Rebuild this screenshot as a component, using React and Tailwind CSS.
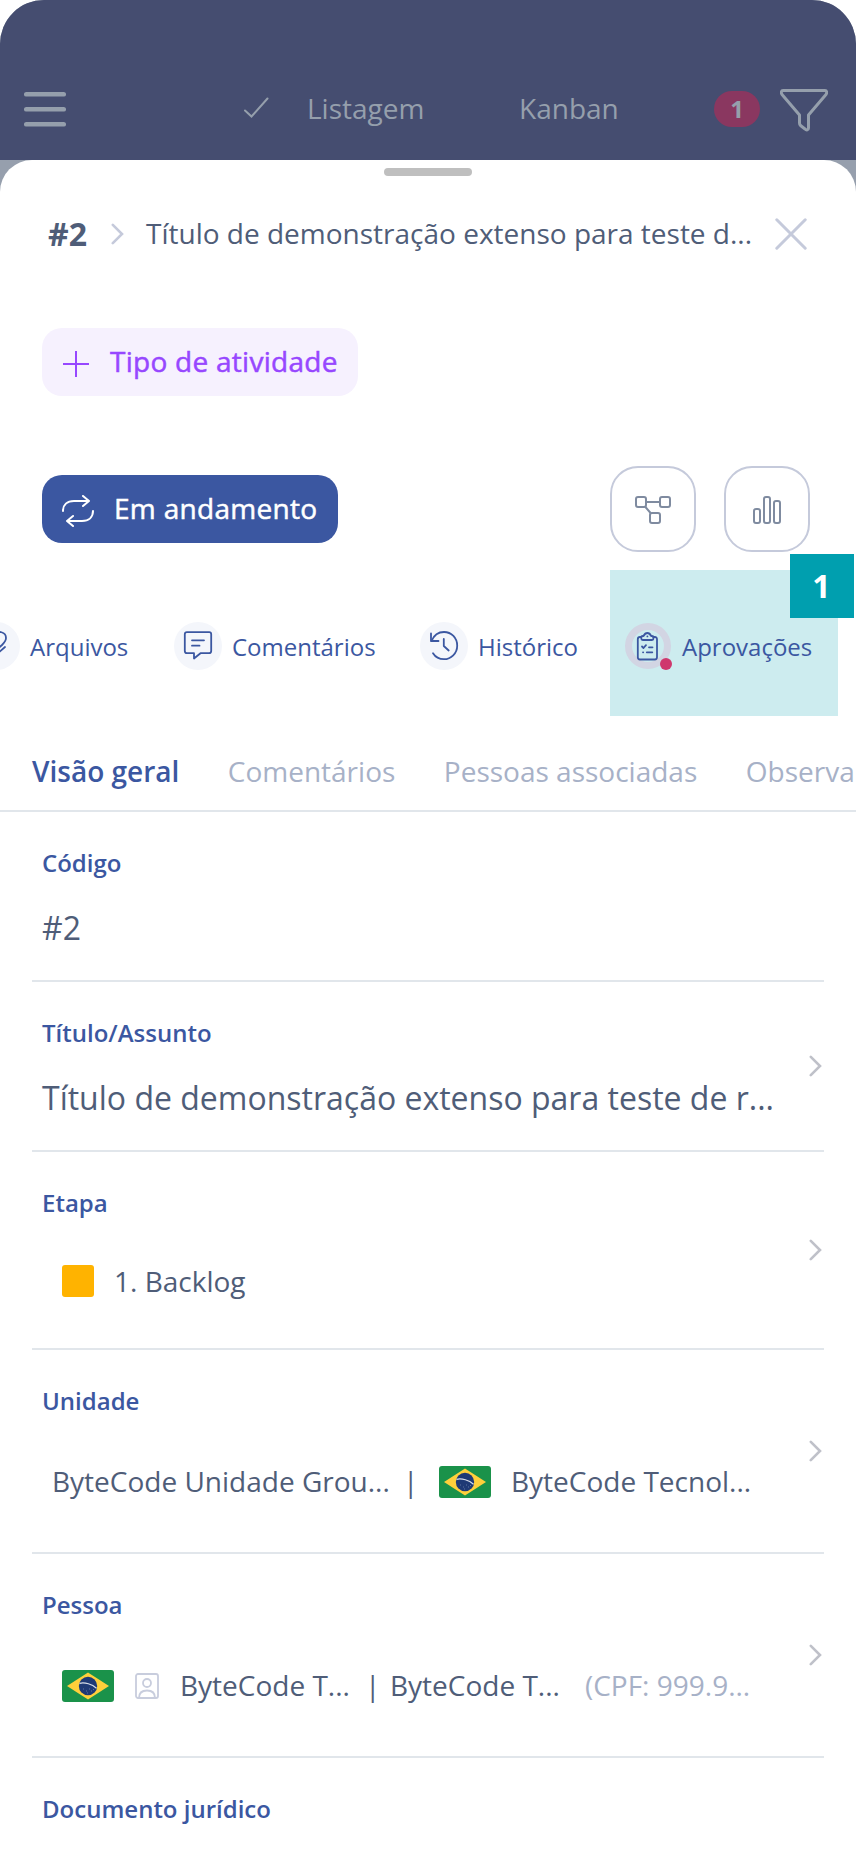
import React, { useState } from 'react';

const Chevron = ({ className }) => (
  <svg className={className} width="13" height="22" viewBox="0 0 13 22" fill="none" stroke="currentColor" strokeWidth="2.6">
    <path d="M1.8 1.8 L11 11 L1.8 20.2" strokeLinecap="round" />
  </svg>
);

const BrazilFlag = () => (
  <svg className="mt-[2px] shrink-0" width="52" height="32" viewBox="0 0 52 32">
    <rect width="52" height="32" rx="3" fill="#1a924a" />
    <path d="M5 16 L26 2.5 L47 16 L26 29.5 Z" fill="#ffd03b" />
    <circle cx="26" cy="16" r="9.2" fill="#1f3a75" />
    <path d="M17.5 13.3 C23 12.2 30 14 34.5 18.2" stroke="#d7dde8" strokeWidth="1.2" fill="none" />
    <path d="M21 19h1M24 21h1M27 19h1M29 21h1M25 23h1M31 19.5h1" stroke="#8c9cc0" strokeWidth="0.6" />
  </svg>
);

const icons = {
  clip: (
    <path d="M10 24 L22 12 C26 8.5 34 9.5 34 16 C34 19 32 21 30 23 L17 35 M33 25 L25 32" />
  ),
  comment: (
    <>
      <path d="M13 10.2 H35.2 C36.5 10.2 37.2 11 37.2 12.2 V29 C37.2 30.5 36.5 31.2 35 31.2 H26.5 L20 36.5 V31.2 H13 C11.5 31.2 10.8 30.5 10.8 29 V12.2 C10.8 11 11.5 10.2 13 10.2 Z" />
      <path d="M18 18.3 H30 M18 23.7 H25.5" />
    </>
  ),
  history: (
    <>
      <path d="M11.5 19 C14 13 19 10 24 10 C31.5 10 37.2 16 37.2 23.7 C37.2 31.3 31 37.2 24 37.2 C19 37.2 15 34.5 13 31.3" />
      <path d="M11 11.5 V19 H18.5 M23.8 17 V24 L28.7 28.5" />
    </>
  ),
  approval: (
    <>
      <path d="M17.3 15 H16 C14.5 15 13.8 15.8 13.8 17.2 V35.3 C13.8 36.8 14.5 37.5 16 37.5 H30.8 C32.3 37.5 33 36.8 33 35.3 V17.2 C33 15.8 32.3 15 30.8 15 H29.3" />
      <path d="M17.3 15.2 C17.3 14.4 17.8 14 18.8 14 H19.5 C20.5 12 21.5 11 23.4 11 C25.300 11 26.2 12 27.2 14 H28 C29 14 29.400 14.4 29.400 15.2 V16.500 C29.400 17.500 29 18 28 18 H18.800 C17.800 18 17.300 17.500 17.300 16.500 Z" />
      <path d="M23.4 14.3 V14.4 M18 24.5 L19.5 26 L22 23.2 M25 25.3 H28.5 M19 30.3 H19.2 M22.8 30.3 H28.3" />
    </>
  ),
};

const ActionItem = ({ icon, label, alert }) => (
  <button className="flex shrink-0 items-center gap-[10px] text-[24px] leading-8 text-[#3b57a1]">
    <span className="relative h-12 w-12">
      <span className={`absolute rounded-full ${alert ? 'inset-px border-[7px] border-[#d2d5e3]' : 'inset-0 bg-[#f4f6fb]'}`} />
      <svg className="relative" width="48" height="48" viewBox="0 0 48 48" fill="none" stroke="currentColor" strokeWidth="1.8" strokeLinecap="round" strokeLinejoin="round">
        {icons[icon]}
      </svg>
      {alert && <span className="absolute bottom-0 right-0 h-3 w-3 rounded-full bg-[#cf376d]" />}
    </span>
    <span className="pt-[2px]">{label}</span>
  </button>
);

const Field = ({ label, height, arrow, children }) => (
  <div className={`flex shrink-0 items-center justify-between border-b-2 border-[#e1e6eb] ${height}`}>
    <div className="flex h-full min-w-0 flex-col pl-[10px] pt-[35px]">
      <div className="text-[24px] font-semibold leading-8 text-[#3b57a1]">{label}</div>
      {children}
    </div>
    {arrow && <Chevron className="mr-[2px] shrink-0 text-[#bfc1c9]" />}
  </div>
);

const tabs = ['Visão geral', 'Comentários', 'Pessoas associadas', 'Observa'];

const App = () => {
  const [activeTab, setActiveTab] = useState('Visão geral');

  return (
    <div className="h-[1852px] w-[856px] overflow-hidden rounded-[44px] bg-[linear-gradient(#969fad_200px,white_200px)] font-['Open_Sans',sans-serif] text-[#4f5d78]">
      {/* Top bar */}
      <header className="flex h-40 items-start bg-[#454d70] pl-6 pr-7 pt-[88px] text-[28px] leading-10 text-[#959fac]">
        <svg width="42" height="42" viewBox="0 0 42 42" stroke="currentColor" strokeWidth="4.5" strokeLinecap="round">
          <path d="M2.2 6.3 H39.8 M2.2 21.3 H39.8 M2.2 36.3 H39.8" />
        </svg>
        <svg className="ml-[178px] mt-[9px]" width="26" height="22" viewBox="0 0 26 22" fill="none" stroke="currentColor" strokeWidth="2" strokeLinecap="round">
          <path d="M1 13.5 L7.5 19.5 L23.5 1.5" />
        </svg>
        <span className="ml-[37px] w-[212px]">Listagem</span>
        <span className="w-[195px]">Kanban</span>
        <span className="mt-[3px] flex h-9 w-[46px] items-center justify-center rounded-full bg-[#8a3760] text-[24px] font-bold">1</span>
        <svg className="ml-5" width="48" height="44" viewBox="0 0 48 44" fill="none" stroke="currentColor" strokeWidth="3" strokeLinejoin="round">
          <path d="M3 2.5 H45 C47 2.5 47 5 46 6.5 L28.5 27 V40 C28.5 42 26.5 42.5 25 41 L20.5 37.5 C20 37 19.5 36 19.5 35 V27 L2 6.5 C1 5 1 2.5 3 2.5 Z" />
        </svg>
      </header>

      {/* Bottom sheet */}
      <main className="flex h-[1692px] flex-col rounded-t-[32px] bg-white">
        <div className="mx-auto mt-2 h-2 w-[88px] shrink-0 rounded-full bg-[#bfbfbf]" />

        <div className="mt-[38px] flex h-10 shrink-0 items-center pl-12 pr-[49px] leading-10">
          <span className="w-[63px] text-[32px] font-bold">#2</span>
          <Chevron className="shrink-0 text-[#c5cadb]" />
          <h1 className="-mt-[2px] ml-[22px] w-[620px] whitespace-nowrap text-[28px]">Título de demonstração extenso para teste d...</h1>
          <svg className="ml-auto shrink-0 text-[#c5cadb]" width="32" height="32" viewBox="0 0 32 32" stroke="currentColor" strokeWidth="3" strokeLinecap="round">
            <path d="M1.8 1.8 L30.2 30.2 M30.2 1.8 L1.8 30.2" />
          </svg>
        </div>

        <button className="ml-[42px] mt-[74px] flex h-[68px] w-[316px] shrink-0 items-center rounded-[20px] bg-[#f6f1fe] pl-[21px] text-[28px] font-medium text-[#9747ff]">
          <svg className="mt-[4px]" width="26" height="26" viewBox="0 0 26 26" stroke="currentColor" strokeWidth="2">
            <path d="M13 0 V26 M0 13 H26" />
          </svg>
          <span className="-mt-[2px] ml-[21px] tracking-[0.27px] [-webkit-text-stroke:0.5px_currentColor]">Tipo de atividade</span>
        </button>

        <div className="mt-[70px] flex h-[86px] shrink-0 items-center pl-[42px] pr-[46px]">
          <button className="flex h-[68px] w-[296px] items-center rounded-[20px] bg-[#3b57a1] pl-5 text-[28px] font-medium text-white">
            <svg className="mt-[3px]" width="32" height="32" viewBox="0 0 32 32" fill="none" stroke="currentColor" strokeWidth="2" strokeLinecap="round" strokeLinejoin="round">
              <path d="M1 16 C1 10 5 6 12 6 H27 M21 1 L27 6 L21 11" />
              <path d="M31 16 C31 22 27 26 20 26 H5 M11 21 L5 26 L11 31" />
            </svg>
            <span className="-mt-[2px] ml-5 tracking-[0.3px] [-webkit-text-stroke:0.5px_currentColor]">Em andamento</span>
          </button>
          <div className="ml-auto flex gap-7 text-[#7f8ba0]">
            <button className="flex h-[86px] w-[86px] items-center justify-center rounded-[28px] border-2 border-[#c5cadb]">
              <svg className="mt-[2px]" width="36" height="28" viewBox="0 0 36 28" fill="none" stroke="currentColor" strokeWidth="2">
                <rect x="1" y="1" width="10" height="10" rx="2" />
                <rect x="25" y="1" width="10" height="10" rx="2" />
                <rect x="15" y="17" width="10" height="10" rx="2" />
                <path d="M11 6 H25 M10 10.5 L16 17.5" />
              </svg>
            </button>
            <button className="flex h-[86px] w-[86px] items-center justify-center rounded-[28px] border-2 border-[#c5cadb]">
              <svg className="mt-[2px]" width="28" height="28" viewBox="0 0 28 28" fill="none" stroke="currentColor" strokeWidth="2">
                <rect x="1" y="13" width="6" height="14" rx="2" />
                <rect x="11" y="1" width="6" height="26" rx="2" />
                <rect x="21" y="5" width="6" height="22" rx="2" />
              </svg>
            </button>
          </div>
        </div>

        {/* Shortcuts */}
        <div className="relative mt-[18px] flex h-[146px] shrink-0 items-start">
          <div className="-ml-7 w-[202px] shrink-0 pt-[52px]">
            <ActionItem icon="clip" label="Arquivos" />
          </div>
          <div className="w-[246px] shrink-0 pt-[52px]">
            <ActionItem icon="comment" label="Comentários" />
          </div>
          <div className="w-[190px] shrink-0 pt-[52px]">
            <ActionItem icon="history" label="Histórico" />
          </div>
          <div className="h-full w-[228px] shrink-0 bg-[#cdecef] pl-[14px] pt-[52px]">
            <ActionItem icon="approval" label="Aprovações" alert />
          </div>
          <span className="absolute -top-4 right-[2px] flex h-16 w-16 items-center justify-center bg-[#009faf] pb-px pr-px text-[32px] font-bold text-white">1</span>
        </div>

        {/* Tabs */}
        <nav className="flex h-24 shrink-0 gap-[48.5px] overflow-hidden whitespace-nowrap border-b-2 border-[#e1e6eb] pl-8 pt-[35px] text-[28px] leading-10">
          {tabs.map((tab) => (
            <button
              key={tab}
              onClick={() => setActiveTab(tab)}
              className={`h-10 shrink-0 ${activeTab === tab ? 'font-semibold text-[#3b57a1]' : 'text-[#a7b1c7]'}`}
            >
              {tab}
            </button>
          ))}
        </nav>

        {/* Fields */}
        <section className="flex flex-col whitespace-nowrap px-8">
          <Field label="Código" height="h-[170px]">
            <div className="mt-[27px] text-[32px] leading-[44px]">#2</div>
          </Field>
          <Field label="Título/Assunto" height="h-[170px]" arrow>
            <div className="mt-[27px] text-[32px] leading-[44px]">Título de demonstração extenso para teste de r...</div>
          </Field>
          <Field label="Etapa" height="h-[198px]" arrow>
            <div className="mt-[42px] flex items-center pl-5 text-[28px] leading-10">
              <span className="mr-5 h-8 w-8 rounded-[3px] bg-[#ffb300]" />
              1. Backlog
            </div>
          </Field>
          <Field label="Unidade" height="h-[204px]" arrow>
            <div className="mt-11 flex items-center pl-[10px] text-[28px] leading-10">
              <span className="w-[351px]">ByteCode Unidade Grou...</span>
              <span className="w-[36px]">|</span>
              <BrazilFlag />
              <span className="ml-5">ByteCode Tecnol...</span>
            </div>
          </Field>
          <Field label="Pessoa" height="h-[204px]" arrow>
            <div className="mt-11 flex items-center pl-5 text-[28px] leading-10">
              <BrazilFlag />
              <svg className="ml-[21px] mt-[2px] text-[#c8cddd]" width="24" height="26" viewBox="0 0 24 26" fill="none" stroke="currentColor" strokeWidth="1.8">
                <rect x="1" y="1" width="22" height="24" rx="2" />
                <circle cx="12" cy="10" r="4" />
                <path d="M4 25 C4 20 7 17.5 12 17.5 C17 17.5 20 20 20 25" />
              </svg>
              <span className="ml-[21px] w-[185px]">ByteCode T...</span>
              <span className="w-[25px]">|</span>
              <span>ByteCode T...</span>
              <span className="ml-[25px] text-[#a7b1c7]">(CPF: 999.9...</span>
            </div>
          </Field>
          <div className="pl-[10px] pt-[35px] text-[24px] font-semibold leading-8 text-[#3b57a1]">Documento jurídico</div>
        </section>
      </main>
    </div>
  );
};

export default App;
